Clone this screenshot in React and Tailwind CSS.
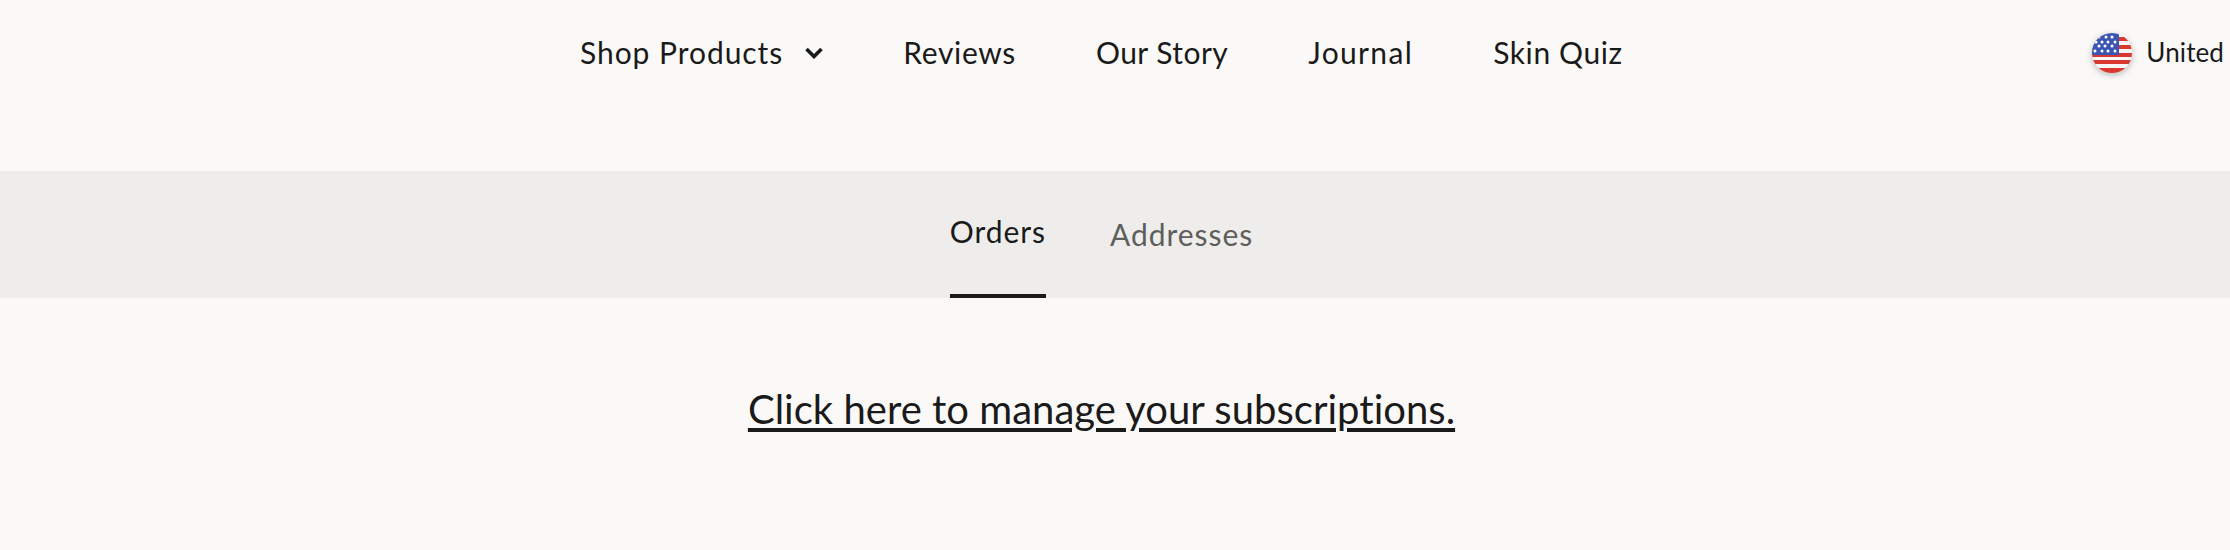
import React from 'react';

const navLinks = [
  { label: 'Reviews', spacing: 'tracking-[0.65px]' },
  { label: 'Our Story', spacing: 'tracking-[0.45px]' },
  { label: 'Journal', spacing: 'tracking-[1.35px]' },
  { label: 'Skin Quiz', spacing: 'tracking-[0.6px]' },
];

function UsFlag() {
  return (
    <svg viewBox="0 0 40 40" className="h-10 w-10 shrink-0 drop-shadow-[0_2px_3px_rgba(0,0,0,0.25)]">
      <defs>
        <clipPath id="flag-circle">
          <circle cx="20" cy="20" r="20" />
        </clipPath>
      </defs>
      <g clipPath="url(#flag-circle)">
        <rect width="40" height="40" fill="#f5f5f5" />
        <rect y="4" width="40" height="4" fill="#d8382f" />
        <rect y="12" width="40" height="4" fill="#d8382f" />
        <rect y="20" width="40" height="4" fill="#d8382f" />
        <rect y="27" width="40" height="4" fill="#d8382f" />
        <rect y="35" width="40" height="5" fill="#d8382f" />
        <rect width="27" height="22" fill="#3b55b4" />
        {[
          [7, 4], [14, 4], [20, 4],
          [4, 9], [10, 9], [16, 9], [23, 9],
          [7, 13], [13, 13], [20, 13],
          [3, 18], [10, 18], [16, 18], [23, 18],
        ].map(([x, y]) => (
          <circle key={`${x}-${y}`} cx={x} cy={y} r="1.5" fill="#fff" />
        ))}
      </g>
    </svg>
  );
}

export default function App() {
  return (
    <div className="h-[550px] overflow-hidden bg-[#faf9f7] font-['Lato','Liberation_Sans',sans-serif] text-[#1a1a1a]">
      <header className="flex h-[105px] items-center whitespace-nowrap pl-[580px] pr-[6px] text-[30px] tracking-[0.95px]">
        <nav className="flex items-center">
          <a className="flex items-center">
            Shop Products
            <svg viewBox="0 0 18 12" className="ml-[22px] h-3 w-[18px]" fill="none" stroke="#1a1a1a" strokeWidth="3.6">
              <path d="M1.5 2 L9 9.5 L16.5 2" />
            </svg>
          </a>
          {navLinks.map((link) => (
            <a key={link.label} className={`ml-[80px] ${link.spacing}`}>{link.label}</a>
          ))}
        </nav>
        <div className="ml-auto flex items-center gap-[14px] text-[26px] tracking-[0.1px]">
          <UsFlag />
          <span>United</span>
        </div>
      </header>

      <div className="mt-[66px] flex h-[127px] justify-center gap-16 bg-[#eeedeb] pr-[27px] text-[30px] tracking-[0.95px]">
        <a className="flex h-full items-center border-b-4 border-[#1a1a1a] pb-[3px]">Orders</a>
        <a className="flex h-full items-center text-[#5e5e5c]">Addresses</a>
      </div>

      <div className="mt-[86px] pr-[27px] text-center text-[40px] leading-[50px] tracking-[0.02px]">
        <a className="underline decoration-4 underline-offset-[4px]">Click here to manage your subscriptions.</a>
      </div>
    </div>
  );
}
